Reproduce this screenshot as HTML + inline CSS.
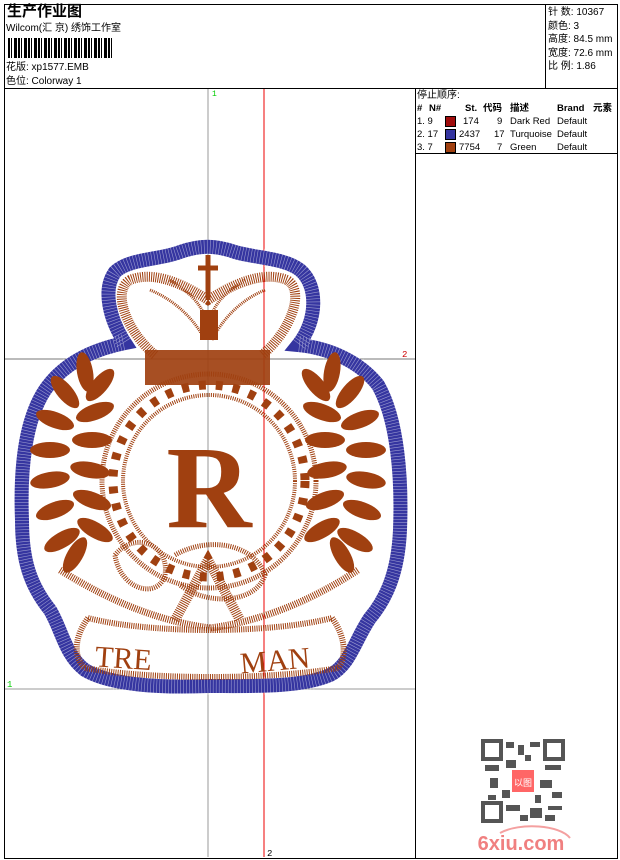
<!DOCTYPE html>
<html><head><meta charset="utf-8"><style>
body{margin:0;background:#fff;width:620px;height:860px;position:relative;overflow:hidden;font-family:"Liberation Sans","Noto Sans CJK SC",sans-serif;color:#000}
.a{position:absolute}
.t{font-size:10px;line-height:12px;white-space:nowrap}
</style></head><body>
<div class="a" style="left:4px;top:4px;width:612px;height:853px;border:1px solid #000"></div>
<div class="a" style="left:4px;top:88px;width:613px;border-top:1px solid #000"></div>
<div class="a" style="left:545px;top:4px;height:84px;border-left:1px solid #000"></div>
<div class="a" style="left:415px;top:88px;height:770px;border-left:1px solid #000"></div>
<div class="a" style="left:415px;top:153px;width:202px;border-top:1px solid #000"></div>
<div class="a" style="left:7px;top:3px;font-size:15px;line-height:18px;font-weight:bold">生产作业图</div>
<div class="a t" style="left:6px;top:23px">Wilcom(汇 京) 绣饰工作室</div>
<div class="a" style="left:8px;top:38px;width:104px;height:20px;background:repeating-linear-gradient(90deg,#000 0 2px,#fff 2px 3px,#000 3px 4px,#fff 4px 6px,#000 6px 9px,#fff 9px 10px)"></div>
<div class="a t" style="left:6px;top:62px">花版: xp1577.EMB</div>
<div class="a t" style="left:6px;top:76px">色位: Colorway 1</div>
<div class="a t" style="left:548px;top:6px;line-height:13.5px">针 数: 10367<br>颜色: 3<br>高度: 84.5 mm<br>宽度: 72.6 mm<br>比 例: 1.86</div>
<div class="a t" style="left:417px;top:90px">停止顺序:</div>
<div class="a" style="left:417px;top:102px;font-size:9.5px;line-height:13px;white-space:nowrap">
<div style="font-weight:bold;text-decoration:underline"><span class="a" style="left:0">#</span><span class="a" style="left:12px">N#</span><span class="a" style="left:48px">St.</span><span class="a" style="left:66px">代码</span><span class="a" style="left:93px">描述</span><span class="a" style="left:140px">Brand</span><span class="a" style="left:176px">元素</span></div>
<div style="position:absolute;top:13px;left:0;width:200px">
<div style="position:relative;height:13px"><span class="a">1. 9</span><span class="a" style="left:28px;top:1px;width:9px;height:9px;background:#a00d0d;border:1px solid #000"></span><span class="a" style="left:46px">174</span><span class="a" style="left:80px">9</span><span class="a" style="left:93px">Dark Red</span><span class="a" style="left:140px">Default</span></div>
<div style="position:relative;height:13px"><span class="a">2. 17</span><span class="a" style="left:28px;top:1px;width:9px;height:9px;background:#3535a0;border:1px solid #000"></span><span class="a" style="left:42px">2437</span><span class="a" style="left:77px">17</span><span class="a" style="left:93px">Turquoise</span><span class="a" style="left:140px">Default</span></div>
<div style="position:relative;height:13px"><span class="a">3. 7</span><span class="a" style="left:28px;top:1px;width:9px;height:9px;background:#a04010;border:1px solid #000"></span><span class="a" style="left:42px">7754</span><span class="a" style="left:80px">7</span><span class="a" style="left:93px">Green</span><span class="a" style="left:140px">Default</span></div>
</div></div>
<svg class="a" style="left:0;top:0" width="620" height="860">
<defs>
<g id="lf"><ellipse cx="0" cy="0" rx="20" ry="8" fill="#a04010"/></g>
</defs>
<line x1="208" y1="89" x2="208" y2="857" stroke="#999"/>
<line x1="264" y1="89" x2="264" y2="857" stroke="#e00"/>
<line x1="5" y1="359" x2="415" y2="359" stroke="#777"/>
<line x1="5" y1="689" x2="415" y2="689" stroke="#999"/>
<text x="212" y="96" font-size="8" fill="#0c0" font-family="Liberation Mono">1</text>
<text x="402" y="357" font-size="9" fill="#c00" font-family="Liberation Mono">2</text>
<text x="7" y="687" font-size="9" fill="#0c0" font-family="Liberation Mono">1</text>
<text x="267" y="856" font-size="9" fill="#000" font-family="Liberation Mono">2</text>
<path d="M208 686 C160 688 110 685 85 670 C65 655 62 630 50 610 C30 585 22 560 22 520 C20 470 25 420 45 390 C62 365 90 350 125 343 C110 320 102 290 115 272 C130 258 160 260 180 252 C200 245 215 245 235 252 C255 258 285 258 300 270 C318 285 318 320 298 345 C330 348 360 362 378 385 C398 420 402 480 400 530 C398 575 385 600 370 618 C355 640 350 665 330 675 C300 688 250 686 208 686 Z" fill="none" stroke="#3535a0" stroke-width="14"/>
<path d="M208 686 C160 688 110 685 85 670 C65 655 62 630 50 610 C30 585 22 560 22 520 C20 470 25 420 45 390 C62 365 90 350 125 343 C110 320 102 290 115 272 C130 258 160 260 180 252 C200 245 215 245 235 252 C255 258 285 258 300 270 C318 285 318 320 298 345 C330 348 360 362 378 385 C398 420 402 480 400 530 C398 575 385 600 370 618 C355 640 350 665 330 675 C300 688 250 686 208 686 Z" fill="none" stroke="#fff" stroke-width="18" stroke-dasharray="0.6 2.4" opacity=".5"/>
<g fill="none" stroke="#a04010">
<path d="M155 355 C125 330 112 290 130 280 C155 270 185 285 208 300 C232 285 262 270 287 280 C305 290 292 330 262 355" stroke-width="10" stroke-dasharray="1 1.2"/>
<path d="M150 290 C175 300 195 320 205 340 M265 290 C240 300 222 320 212 340 M170 280 C185 290 200 300 206 320 M245 280 C230 290 215 300 210 320" stroke-width="3" stroke-dasharray="1 1"/>
<rect x="200" y="310" width="18" height="30" fill="#a04010" stroke="none"/>
<path d="M208 255 V300 M198 268 H218" stroke-width="5"/>
<rect x="145" y="350" width="125" height="35" fill="#a04010" stroke="none" opacity=".92"/>
<circle cx="209" cy="481" r="107" stroke-width="5" stroke-dasharray="1 1.2"/>
<circle cx="209" cy="481" r="86" stroke-width="4" stroke-dasharray="1 1.2"/>
<circle cx="209" cy="481" r="96" stroke-width="9" stroke-dasharray="7 10"/>
<path d="M60 570 C100 595 150 620 210 628 C270 620 320 595 358 570" stroke-width="7" stroke-dasharray="1 1.2"/>
<path d="M88 618 C150 634 270 634 332 618 M85 668 C150 680 270 680 338 668 M88 618 C72 640 75 660 85 668 M332 618 C348 640 345 660 338 668" stroke-width="6" stroke-dasharray="1 1.2"/>
<path d="M115 555 C135 530 170 545 165 575 C158 600 120 590 115 555 Z M175 555 C210 535 255 545 265 575 C255 605 205 605 180 585" stroke-width="5" stroke-dasharray="1 1.2"/>
<path d="M175 620 L208 560 L240 620" stroke-width="10" stroke-dasharray="1 1.2"/>
</g>
<g>
<use href="#lf" transform="translate(62 540) rotate(-30)"/><use href="#lf" transform="translate(95 530) rotate(-150)"/>
<use href="#lf" transform="translate(55 510) rotate(-20)"/><use href="#lf" transform="translate(92 500) rotate(-160)"/>
<use href="#lf" transform="translate(50 480) rotate(-10)"/><use href="#lf" transform="translate(90 470) rotate(-170)"/>
<use href="#lf" transform="translate(50 450) rotate(0)"/><use href="#lf" transform="translate(92 440) rotate(180)"/>
<use href="#lf" transform="translate(55 420) rotate(20)"/><use href="#lf" transform="translate(95 412) rotate(160)"/>
<use href="#lf" transform="translate(65 392) rotate(50)"/><use href="#lf" transform="translate(100 385) rotate(130)"/>
<use href="#lf" transform="translate(85 372) rotate(80)"/><use href="#lf" transform="translate(75 555) rotate(-60)"/>
<use href="#lf" transform="translate(355 540) rotate(30)"/><use href="#lf" transform="translate(322 530) rotate(150)"/>
<use href="#lf" transform="translate(362 510) rotate(20)"/><use href="#lf" transform="translate(325 500) rotate(160)"/>
<use href="#lf" transform="translate(366 480) rotate(10)"/><use href="#lf" transform="translate(327 470) rotate(170)"/>
<use href="#lf" transform="translate(366 450) rotate(0)"/><use href="#lf" transform="translate(325 440) rotate(180)"/>
<use href="#lf" transform="translate(360 420) rotate(-20)"/><use href="#lf" transform="translate(322 412) rotate(-160)"/>
<use href="#lf" transform="translate(350 392) rotate(-50)"/><use href="#lf" transform="translate(316 385) rotate(-130)"/>
<use href="#lf" transform="translate(332 372) rotate(-80)"/><use href="#lf" transform="translate(342 555) rotate(60)"/>
</g>
<text x="209" y="527" text-anchor="middle" font-family="Liberation Serif" font-weight="bold" font-size="118" fill="#a04010">R</text>
<text x="95" y="668" font-family="Liberation Serif" font-size="30" fill="#a04010" transform="rotate(4 120 660)">TRE</text>
<text x="240" y="670" font-family="Liberation Serif" font-size="30" fill="#a04010" transform="rotate(-5 280 660)">MAN</text>
<g fill="#555">
<rect x="483" y="741" width="18" height="18" fill="none" stroke="#555" stroke-width="4"/>
<rect x="545" y="741" width="18" height="18" fill="none" stroke="#555" stroke-width="4"/>
<rect x="483" y="803" width="18" height="18" fill="none" stroke="#555" stroke-width="4"/>
<path d="M506 742h8v6h-8zM518 745h6v10h-6zM530 742h10v5h-10zM485 765h14v6h-14zM506 760h10v8h-10zM545 765h16v5h-16zM490 778h8v10h-8zM540 780h12v8h-12zM552 792h10v6h-10zM506 805h14v6h-14zM530 808h12v10h-12zM548 806h14v4h-14zM520 815h8v6h-8zM502 790h8v8h-8zM545 815h10v6h-10zM525 755h6v6h-6zM488 795h8v5h-8zM535 795h6v8h-6z"/>
</g>
<rect x="512" y="770" width="22" height="22" fill="#f66"/>
<text x="523" y="786" font-size="9" fill="#fff" text-anchor="middle">以图</text>
<text x="521" y="850" text-anchor="middle" font-family="Liberation Sans" font-weight="bold" font-size="20" fill="#f08080">6xiu.com</text>
<path d="M500 833 C520 822 560 825 570 838" stroke="#f4a0a0" stroke-width="2" fill="none"/>
</svg>
</body></html>
